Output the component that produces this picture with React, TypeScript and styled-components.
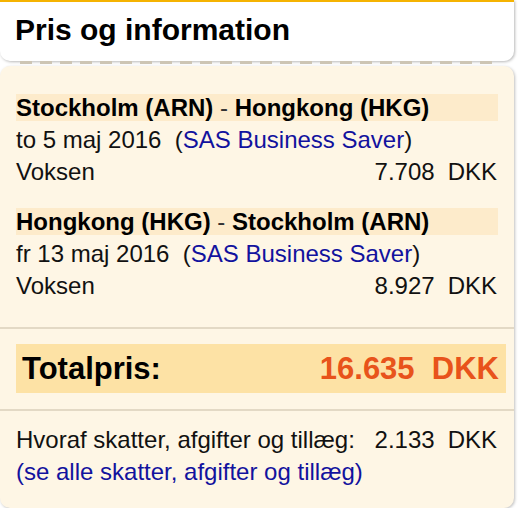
import React from "react"
import styled, { createGlobalStyle } from "styled-components"

const GlobalStyle = createGlobalStyle`
	body {
		margin: 0;
		background: #ffffff;
		font-family: "Liberation Sans", Arial, Helvetica, sans-serif;
		color: #111;
	}
`

const Panel = styled.div`
	width: 514px;
	display: flex;
	flex-direction: column;
`

const Header = styled.div`
	height: 59px;
	box-sizing: border-box;
	height: 61px;
	border-top: 2px solid #f5b301;
	background: #ffffff;
	border-radius: 0 0 10px 10px;
	box-shadow: 1px 1px 3px rgba(0, 0, 0, 0.28);
	display: flex;
	align-items: center;
	padding: 0 0 3px 15px;
	font-size: 30px;
	font-weight: bold;
	color: #000;
`

const Dashes = styled.div`
	height: 3px;
	margin: 0 22px 0 20px;
	background: repeating-linear-gradient(to right, #cdc5b4 0 12px, transparent 12px 20px);
`

const Body = styled.div`
	margin-top: 2px;
	background: #fef6e5;
	border-radius: 10px;
	box-shadow: 1px 1px 3px rgba(0, 0, 0, 0.25);
	padding: 28px 0 20px;
	display: flex;
	flex-direction: column;
`

const Segment = styled.div<{ $gap?: number }>`
	padding: 0 16px;
	margin-top: ${(p) => p.$gap ?? 0}px;
`

const RouteTitle = styled.div`
	background: #fdebcb;
	height: 27px;
	line-height: 27px;
	font-size: 24px;
	font-weight: bold;
	color: #000;
	white-space: pre;
`

const Dash = styled.span`
	font-weight: normal;
	color: #333;
`

const Line = styled.div<{ $top?: number }>`
	font-size: 24px;
	line-height: 32px;
	margin-top: ${(p) => p.$top ?? 0}px;
	display: flex;
	align-items: baseline;
	white-space: pre;
`

const Link = styled.span`
	color: #12129e;
`

const Grow = styled.span`
	flex: 1;
`

const Amount = styled.span`
	text-align: right;
`

const Currency = styled.span`
	margin-left: 13px;
	margin-right: 1px;
`

const Separator = styled.div<{ $top: number }>`
	height: 2px;
	background: #e3d9c5;
	margin-top: ${(p) => p.$top}px;
`

const TotalBox = styled.div`
	margin: 15px 8px 0 16px;
	height: 49px;
	background: #fde2a5;
	display: flex;
	align-items: center;
	padding: 0 7px 0 6px;
	font-size: 31px;
	font-weight: bold;
	color: #000;
`

const TotalAmount = styled.span`
	color: #e8531b;
	white-space: pre;
`

type Leg = { from: string; to: string; date: string; fare: string; price: string }

const legs: Leg[] = [
	{ from: "Stockholm (ARN)", to: "Hongkong (HKG)", date: "to 5 maj 2016", fare: "SAS Business Saver", price: "7.708" },
	{ from: "Hongkong (HKG)", to: "Stockholm (ARN)", date: "fr 13 maj 2016", fare: "SAS Business Saver", price: "8.927" },
]

export default function App() {
	return (
		<>
			<GlobalStyle />
			<Panel>
				<Header>Pris og information</Header>
				<Dashes />
				<Body>
					{legs.map((leg, i) => (
						<Segment key={i} $gap={i === 0 ? 0 : 20}>
							<RouteTitle>
								{leg.from} <Dash>-</Dash> {leg.to}
							</RouteTitle>
							<Line $top={3}>
								{leg.date}  (<Link>{leg.fare}</Link>)
							</Line>
							<Line>
								<Grow>Voksen</Grow>
								<Amount>{leg.price}</Amount>
								<Currency>DKK</Currency>
							</Line>
						</Segment>
					))}
					<Separator $top={25} />
					<TotalBox>
						<Grow>Totalpris:</Grow>
						<TotalAmount>16.635  DKK</TotalAmount>
					</TotalBox>
					<Separator $top={16} />
					<Segment $gap={13}>
						<Line>
							<Grow>Hvoraf skatter, afgifter og tillæg:</Grow>
							<Amount>2.133</Amount>
							<Currency>DKK</Currency>
						</Line>
						<Line>
							<Link>(se alle skatter, afgifter og tillæg)</Link>
						</Line>
					</Segment>
				</Body>
			</Panel>
		</>
	)
}
